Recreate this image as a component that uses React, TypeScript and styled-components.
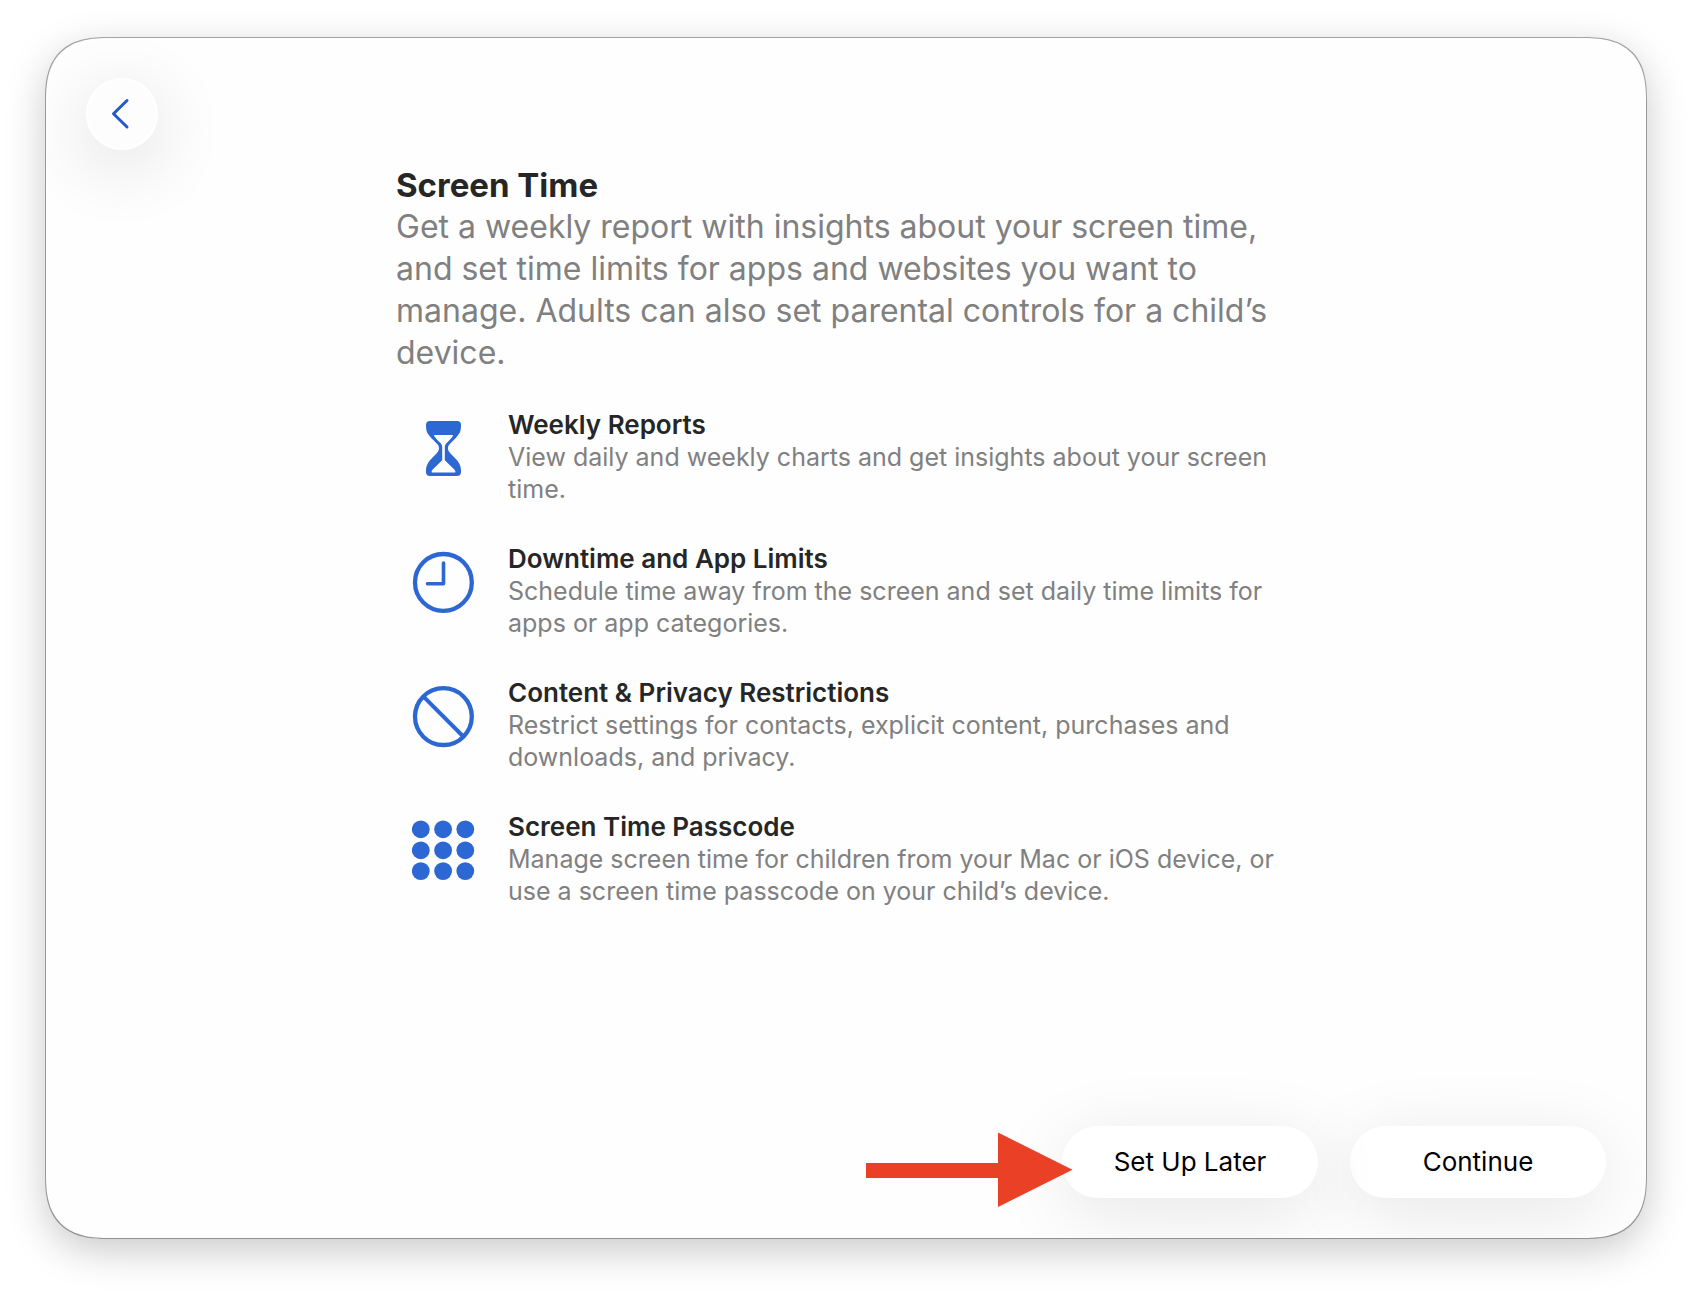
import React from "react";
import styled, { createGlobalStyle } from "styled-components";

const GlobalStyle = createGlobalStyle`
  *, *::before, *::after { box-sizing: border-box; }
  body {
    margin: 0;
    background: #ffffff;
    font-family: Inter, "Liberation Sans", sans-serif;
    -webkit-font-smoothing: antialiased;
  }
`;

const Desktop = styled.div`
  display: flex;
  min-height: 100vh;
  padding: 38px 46px 54px;
`;

const Window = styled.main`
  flex: 1;
  display: flex;
  flex-direction: column;
  padding: 40px;
  overflow: hidden;
  background: #fefefe;
  border-radius: 52px;
  box-shadow: 0 0 0 1px rgba(0, 0, 0, 0.32), 0 12px 40px rgba(0, 0, 0, 0.22);

  @supports (corner-shape: superellipse(1.4)) {
    border-radius: 64px;
    corner-shape: superellipse(1.4);
  }
`;

const BackButton = styled.button`
  display: grid;
  place-items: center;
  width: 72px;
  height: 72px;
  padding: 0;
  border: 2px solid #ffffff;
  border-radius: 50%;
  background: #fdfdfd;
  color: #2459c6;
  box-shadow: 0 16px 72px rgba(0, 0, 0, 0.14);
  cursor: pointer;
`;

const Content = styled.section`
  flex: 1;
  width: 100%;
  max-width: 900px;
  margin: 14px auto 40px;
`;

const Title = styled.h1`
  margin: 0;
  font-size: 33px;
  line-height: 42px;
  font-weight: 700;
  color: #262626;
`;

const Intro = styled.p`
  margin: 0;
  font-size: 32px;
  line-height: 42px;
  color: #808080;
`;

const FeatureList = styled.ul`
  display: flex;
  flex-direction: column;
  gap: 38px;
  margin: 35px 0 0;
  padding: 0;
  list-style: none;
`;

const Feature = styled.li`
  display: flex;
  gap: 32px;
  padding-left: 16px;
`;

const FeatureIcon = styled.svg`
  flex: none;
  width: 64px;
  height: 64px;
  margin-top: 7px;
  color: #2c67d3;
`;

const FeatureText = styled.div`
  flex: 1;
  line-height: 32px;
`;

const FeatureTitle = styled.h2`
  margin: 0;
  font-size: 26px;
  font-weight: 600;
  color: #262626;
`;

const FeatureDescription = styled.p`
  margin: 0;
  font-size: 25px;
  color: #808080;
`;

const Actions = styled.footer`
  display: flex;
  justify-content: flex-end;
  gap: 32px;
`;

const ActionSlot = styled.div`
  position: relative;
`;

const ActionButton = styled.button`
  width: 256px;
  height: 72px;
  padding: 0;
  border: 0;
  border-radius: 36px;
  background: #ffffff;
  box-shadow: 0 14px 72px rgba(0, 0, 0, 0.1);
  font: inherit;
  font-size: 26px;
  line-height: 32px;
  color: #000000;
  cursor: pointer;
`;

const PointerArrow = styled.svg`
  position: absolute;
  top: 6px;
  left: -196px;
  width: 208px;
  height: 76px;
  pointer-events: none;
`;

const Hourglass = () => (
  <>
    <path
      fill="currentColor"
      d="M18 5H45Q49 5 49 9C49 15 48 17 45 20.500C42.500 23.500 41 24.800 38.500 27.200C36.600 29.100 36 30.500 36 32.300C36 34.200 36.600 35.500 38.500 37.400C41 39.800 43 42 45.200 44.500C48 48 49 50.500 49 55V56Q49 60 45 60H18Q14 60 14 56V55C14 50.500 15 48 17.800 44.500C20 42 22 39.800 24.500 37.400C26.400 35.500 27 34.200 27 32.300C27 30.500 26.400 29.100 24.500 27.200C22 24.800 20.500 23.500 18 20.500C15 17 14 15 14 9Q14 5 18 5Z"
    />
    <path
      fill="#fefefe"
      d="M22.600 19H40.400Q41.500 19 40.700 20.200C38.800 22.800 36.500 25.200 34.300 27.200Q32.800 28.800 32.800 31V44.200L42.300 53.600Q44.400 56.300 42.600 56.500H20.400Q18.600 56.300 20.700 53.600L30.200 44.200V31Q30.200 28.800 28.700 27.200C26.500 25.200 24.200 22.800 22.300 20.200Q21.500 19 22.600 19Z"
    />
  </>
);

const Clock = () => (
  <g fill="none" stroke="currentColor" strokeLinecap="round" strokeLinejoin="round">
    <circle cx="31.400" cy="32.400" r="28.400" strokeWidth="4.300" />
    <path d="M31.500 13V33.700H15.500" strokeWidth="3.600" />
  </g>
);

const NoEntry = () => (
  <g fill="none" stroke="currentColor">
    <circle cx="31.400" cy="32.600" r="28.400" strokeWidth="4.300" />
    <path d="M11.500 12.700L51.300 52.500" strokeWidth="4" />
  </g>
);

const Keypad = () => (
  <g fill="currentColor">
    {[11.3, 32.3, 53.1].map((cy) =>
      [8.8, 31.1, 53.3].map((cx) => <circle key={`${cx}-${cy}`} cx={cx} cy={cy} r="8.900" />)
    )}
  </g>
);

const features = [
  {
    title: "Weekly Reports",
    description: "View daily and weekly charts and get insights about your screen time.",
    Icon: Hourglass,
  },
  {
    title: "Downtime and App Limits",
    description: "Schedule time away from the screen and set daily time limits for apps or app categories.",
    Icon: Clock,
  },
  {
    title: "Content & Privacy Restrictions",
    description: "Restrict settings for contacts, explicit content, purchases and downloads, and privacy.",
    Icon: NoEntry,
  },
  {
    title: "Screen Time Passcode",
    description:
      "Manage screen time for children from your Mac or iOS device, or use a screen time passcode on your child’s device.",
    Icon: Keypad,
  },
];

export default function App() {
  return (
    <>
      <GlobalStyle />
      <Desktop>
        <Window>
          <BackButton type="button" aria-label="Back">
            <svg width="32" height="32" viewBox="0 0 32 32" fill="none" aria-hidden="true">
              <path
                d="M21 2.500L7.500 15.700L21 29"
                stroke="currentColor"
                strokeWidth="3"
                strokeLinecap="round"
                strokeLinejoin="round"
              />
            </svg>
          </BackButton>

          <Content>
            <Title>Screen Time</Title>
            <Intro>
              Get a weekly report with insights about your screen time, and set time limits for apps and
              websites you want to manage. Adults can also set parental controls for a child’s device.
            </Intro>
            <FeatureList>
              {features.map(({ title, description, Icon }) => (
                <Feature key={title}>
                  <FeatureIcon viewBox="0 0 64 64" aria-hidden="true">
                    <Icon />
                  </FeatureIcon>
                  <FeatureText>
                    <FeatureTitle>{title}</FeatureTitle>
                    <FeatureDescription>{description}</FeatureDescription>
                  </FeatureText>
                </Feature>
              ))}
            </FeatureList>
          </Content>

          <Actions>
            <ActionSlot>
              <ActionButton type="button">Set Up Later</ActionButton>
              <PointerArrow viewBox="0 0 208 76" aria-hidden="true">
                <path fill="#ea4126" d="M0 31H132V0.500L206.500 37.800L132 75V46H0Z" />
              </PointerArrow>
            </ActionSlot>
            <ActionButton type="button">Continue</ActionButton>
          </Actions>
        </Window>
      </Desktop>
    </>
  );
}
